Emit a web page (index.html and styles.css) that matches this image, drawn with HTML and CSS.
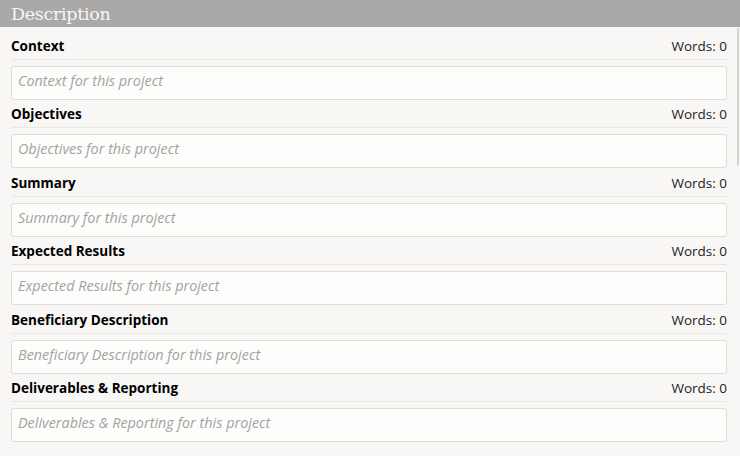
FILE: index.html
```html
<!DOCTYPE html>
<html>
<head>
<meta charset="utf-8">
<link rel="stylesheet" href="styles.css">
</head>
<body>
<div class="panel">
  <div class="panel-head">Description</div>
  <div class="panel-body">
    <div class="field">
      <div class="field-row"><span class="label">Context</span><span class="count">Words: 0</span></div>
      <div class="input">Context for this project</div>
    </div>
    <div class="field">
      <div class="field-row"><span class="label">Objectives</span><span class="count">Words: 0</span></div>
      <div class="input">Objectives for this project</div>
    </div>
    <div class="field">
      <div class="field-row"><span class="label">Summary</span><span class="count">Words: 0</span></div>
      <div class="input">Summary for this project</div>
    </div>
    <div class="field">
      <div class="field-row"><span class="label">Expected Results</span><span class="count">Words: 0</span></div>
      <div class="input">Expected Results for this project</div>
    </div>
    <div class="field">
      <div class="field-row"><span class="label">Beneficiary Description</span><span class="count">Words: 0</span></div>
      <div class="input">Beneficiary Description for this project</div>
    </div>
    <div class="field">
      <div class="field-row"><span class="label">Deliverables &amp; Reporting</span><span class="count">Words: 0</span></div>
      <div class="input">Deliverables &amp; Reporting for this project</div>
    </div>
  </div>
  <div class="scrollbar"></div>
</div>
</body>
</html>
```
FILE: styles.css
```css
html, body {
  margin: 0;
  padding: 0;
  background: #f8f7f5;
}
body {
  font-family: "Open Sans", "Noto Sans", sans-serif;
  font-size: 13.5px;
  color: #111;
}
.panel {
  position: relative;
  width: 740px;
  height: 456px;
  overflow: hidden;
  background: #f8f7f5;
}
.panel-head {
  height: 27px;
  background: #aaa9a7;
  color: #f7f7f7;
  font-family: "DejaVu Serif", serif;
  font-size: 17.5px;
  letter-spacing: -0.3px;
  line-height: 28px;
  padding-left: 11px;
}
.panel-body {
  padding: 10px 13px 0 11px;
}
.field {
  margin-bottom: 5.4px;
}
.field-row {
  display: flex;
  justify-content: space-between;
  align-items: flex-start;
  height: 22px;
  line-height: 19px;
  border-bottom: 1px solid #ebe8e4;
  margin-bottom: 6px;
}
.label {
  font-weight: 700;
  color: #000;
}
.count {
  color: #222;
}
.input {
  box-sizing: border-box;
  height: 34px;
  border: 1px solid #e0dcd7;
  border-radius: 3px;
  background: #fdfdfc;
  padding: 0 6px;
  line-height: 27px;
  font-size: 14.4px;
  font-style: italic;
  color: #a4a29f;
}
.scrollbar {
  position: absolute;
  right: 1px;
  top: 28px;
  width: 2px;
  height: 137px;
  background: #d5d3d0;
}
```
